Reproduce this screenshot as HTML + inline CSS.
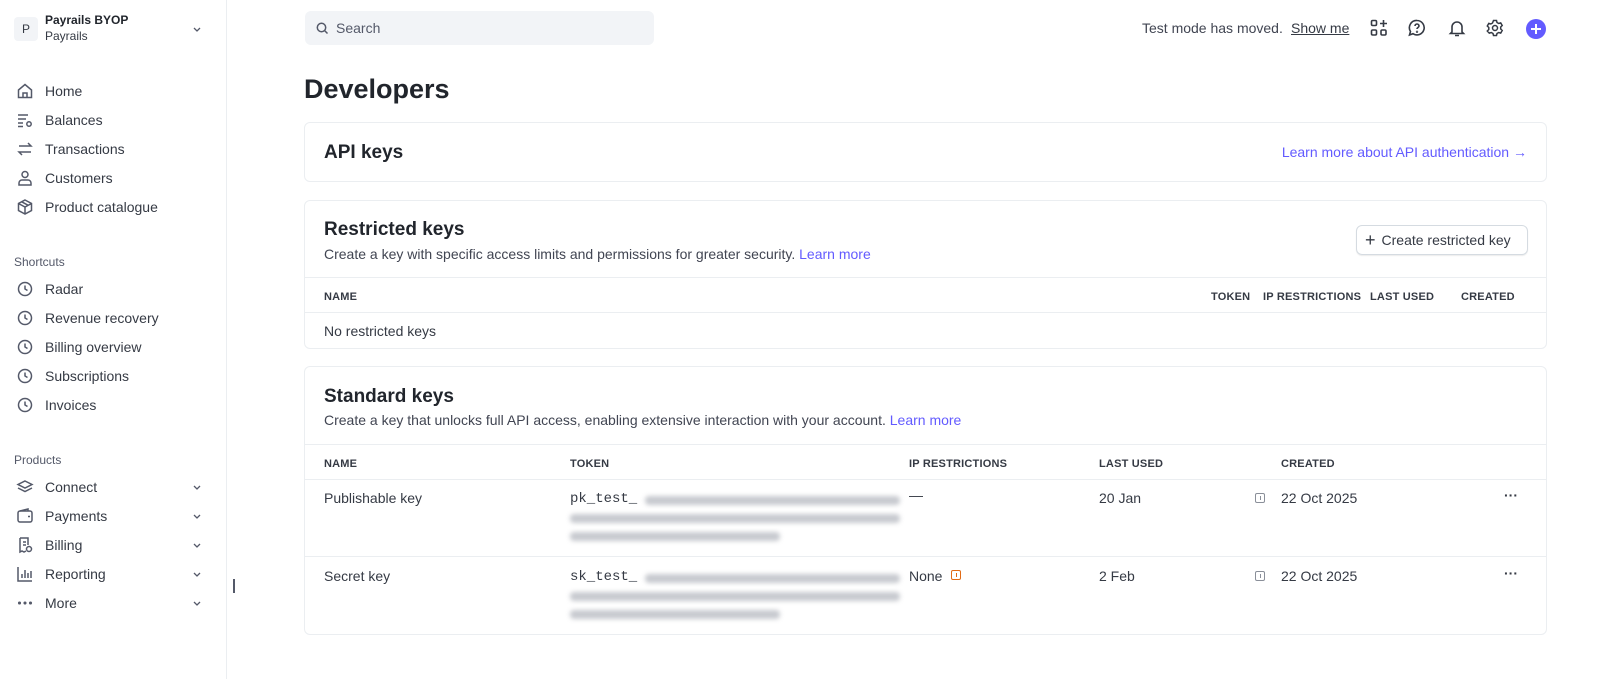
<!DOCTYPE html>
<html><head><meta charset="utf-8"><style>
*{box-sizing:border-box;margin:0;padding:0}
body{width:1617px;height:679px;overflow:hidden;background:#fff;font-family:"Liberation Sans",sans-serif;color:#353a44;font-size:14px;position:relative}
.side{position:absolute;left:0;top:0;width:227px;height:679px;border-right:1px solid #ebeef1}
.abs{position:absolute}
.nav{position:absolute;left:16px;display:flex;align-items:center;font-size:14px;color:#353a44}
.nav svg{width:18px;height:18px;margin-right:11px;fill:none;stroke:#545969;stroke-width:1.5}
.sec{position:absolute;left:14px;font-size:12px;color:#545969}
.chev{position:absolute;left:192px;width:10px;height:10px}
.card{position:absolute;left:304px;width:1243px;border:1px solid #ebeef1;border-radius:6px}
.hl{position:absolute;left:0;right:0;height:1px;background:#ebeef1}
.th{position:absolute;font-size:11px;font-weight:bold;color:#353a44;letter-spacing:.2px}
h2{position:absolute;font-size:19px;font-weight:bold;color:#21252c}
.sub{position:absolute;font-size:14px;color:#414552}
a{color:#635bff;text-decoration:none}
.mono{font-family:"Liberation Mono",monospace;font-size:14px;color:#353a44}
.blur{position:absolute;height:9px;background:#b9bcc3;filter:blur(2.5px);border-radius:4px;opacity:.8}
.info{position:absolute;width:10px;height:10px;border:1px solid #8a8f99;border-radius:2px}
.info:after{content:"";position:absolute;left:3.5px;top:2px;width:1px;height:4px;background:#8a8f99}
.dots{position:absolute;font-size:14px;font-weight:bold;color:#353a44;letter-spacing:0}
</style></head><body>
<div class="side">
  <div class="abs" style="left:14px;top:17px;width:24px;height:24px;background:#f2f4f7;border-radius:4px;font-size:12px;text-align:center;line-height:24px;color:#353a44">P</div>
  <div class="abs" style="left:45px;top:13px;font-size:12px;font-weight:bold;color:#21252c">Payrails BYOP</div>
  <div class="abs" style="left:45px;top:29px;font-size:12px;color:#353a44">Payrails</div>
  <svg class="chev" style="top:24px" viewBox="0 0 10 10"><path d="M2 4l3 3 3-3" stroke="#545969" stroke-width="1.3" fill="none"/></svg>

  <div class="nav" style="top:82px"><svg viewBox="0 0 18 18"><path d="M2.5 8L9 2.5 15.5 8V15.5H2.5Z M7 15.5V11h4v4.5"/></svg>Home</div>
  <div class="nav" style="top:111px"><svg viewBox="0 0 18 18"><path d="M2 4h10M2 8h8M2 12h5M2 15.5h5"/><circle cx="13" cy="13" r="2.2"/></svg>Balances</div>
  <div class="nav" style="top:140px"><svg viewBox="0 0 18 18"><path d="M3 6h12l-3-3M15 12H3l3 3"/></svg>Transactions</div>
  <div class="nav" style="top:169px"><svg viewBox="0 0 18 18"><circle cx="9" cy="5.5" r="3"/><path d="M3 16v-2a3 3 0 013-3h6a3 3 0 013 3v2z"/></svg>Customers</div>
  <div class="nav" style="top:198px"><svg viewBox="0 0 18 18"><path d="M9 2l6.5 3.5v7L9 16l-6.5-3.5v-7zM2.5 5.5L9 9l6.5-3.5M9 9v7M5.7 3.8l6.5 3.5"/></svg>Product catalogue</div>

  <div class="sec" style="top:255px">Shortcuts</div>
  <div class="nav" style="top:280px"><svg viewBox="0 0 18 18"><circle cx="9" cy="9" r="6.5"/><path d="M9 5.5V9l2.5 1.5"/></svg>Radar</div>
  <div class="nav" style="top:309px"><svg viewBox="0 0 18 18"><circle cx="9" cy="9" r="6.5"/><path d="M9 5.5V9l2.5 1.5"/></svg>Revenue recovery</div>
  <div class="nav" style="top:338px"><svg viewBox="0 0 18 18"><circle cx="9" cy="9" r="6.5"/><path d="M9 5.5V9l2.5 1.5"/></svg>Billing overview</div>
  <div class="nav" style="top:367px"><svg viewBox="0 0 18 18"><circle cx="9" cy="9" r="6.5"/><path d="M9 5.5V9l2.5 1.5"/></svg>Subscriptions</div>
  <div class="nav" style="top:396px"><svg viewBox="0 0 18 18"><circle cx="9" cy="9" r="6.5"/><path d="M9 5.5V9l2.5 1.5"/></svg>Invoices</div>

  <div class="sec" style="top:453px">Products</div>
  <div class="nav" style="top:478px"><svg viewBox="0 0 18 18"><path d="M9 3l7 3.5-7 3.5-7-3.5z M2 10l7 3.5 7-3.5"/></svg>Connect</div>
  <div class="nav" style="top:507px"><svg viewBox="0 0 18 18"><rect x="2" y="4" width="14" height="11" rx="2"/><path d="M12 9.5h2M4 4l8-2v2"/></svg>Payments</div>
  <div class="nav" style="top:536px"><svg viewBox="0 0 18 18"><path d="M4 2h8v7M4 2v14l2-1 2 1 2-1M7 6h3M7 9h3"/><circle cx="13" cy="13" r="2.5"/></svg>Billing</div>
  <div class="nav" style="top:565px"><svg viewBox="0 0 18 18"><path d="M2 2v14h14M6 13V9M9 13V5M12 13V8M15 13V6"/></svg>Reporting</div>
  <div class="nav" style="top:594px"><svg viewBox="0 0 18 18"><circle cx="3.5" cy="9" r=".8" fill="#545969"/><circle cx="9" cy="9" r=".8" fill="#545969"/><circle cx="14.5" cy="9" r=".8" fill="#545969"/></svg>More</div>
  <svg class="chev" style="top:482px" viewBox="0 0 10 10"><path d="M2 4l3 3 3-3" stroke="#545969" stroke-width="1.3" fill="none"/></svg>
  <svg class="chev" style="top:511px" viewBox="0 0 10 10"><path d="M2 4l3 3 3-3" stroke="#545969" stroke-width="1.3" fill="none"/></svg>
  <svg class="chev" style="top:540px" viewBox="0 0 10 10"><path d="M2 4l3 3 3-3" stroke="#545969" stroke-width="1.3" fill="none"/></svg>
  <svg class="chev" style="top:569px" viewBox="0 0 10 10"><path d="M2 4l3 3 3-3" stroke="#545969" stroke-width="1.3" fill="none"/></svg>
  <svg class="chev" style="top:598px" viewBox="0 0 10 10"><path d="M2 4l3 3 3-3" stroke="#545969" stroke-width="1.3" fill="none"/></svg>
</div>
<div class="abs" style="left:233px;top:579px;width:2px;height:14px;background:#545969"></div>

<div class="abs" style="left:305px;top:11px;width:349px;height:34px;background:#f2f4f7;border-radius:6px">
  <svg class="abs" style="left:11px;top:11px" width="13" height="13" viewBox="0 0 13 13"><circle cx="5.5" cy="5.5" r="4.2" stroke="#545969" stroke-width="1.5" fill="none"/><path d="M8.5 8.5l3 3" stroke="#545969" stroke-width="1.5"/></svg>
  <div class="abs" style="left:31px;top:9px;font-size:14px;color:#545969">Search</div>
</div>
<div class="abs" style="left:1142px;top:20px;font-size:14px;color:#414552">Test mode has moved.</div>
<div class="abs" style="left:1291px;top:20px;font-size:14px;color:#353a44;text-decoration:underline">Show me</div>
<svg class="abs" style="left:1370px;top:19px" width="18" height="18" viewBox="0 0 18 18" fill="none" stroke="#353a44" stroke-width="1.6"><rect x="1.5" y="1.5" width="5" height="5" rx="1.2"/><rect x="1.5" y="11" width="5" height="5" rx="1.2"/><rect x="11" y="11" width="5" height="5" rx="1.2"/><path d="M13.5 1v7M10 4.5h7"/></svg>
<svg class="abs" style="left:1408px;top:19px" width="18" height="18" viewBox="0 0 18 18" fill="none" stroke="#353a44" stroke-width="1.6"><path d="M9 1.5a7.2 7.2 0 11-4 13.2L1.5 16l1-3.5A7.2 7.2 0 019 1.5z"/><path d="M7 7a2 2 0 114 0c0 1.5-2 1.5-2 3"/><circle cx="9" cy="12.8" r=".4"/></svg>
<svg class="abs" style="left:1448px;top:19px" width="18" height="18" viewBox="0 0 18 18" fill="none" stroke="#353a44" stroke-width="1.6"><path d="M4 13V8a5 5 0 0110 0v5l1.5 1.5h-13z M7 16.5h4"/></svg>
<svg class="abs" style="left:1486px;top:19px" width="18" height="18" viewBox="0 0 18 18" fill="none" stroke="#353a44" stroke-width="1.5"><circle cx="9" cy="9" r="2.5"/><path d="M7.5 1.5h3l.5 2 1.7 1 2-.6 1.5 2.6-1.5 1.5v2l1.5 1.5-1.5 2.6-2-.6-1.7 1-.5 2h-3l-.5-2-1.7-1-2 .6L1.3 12l1.5-1.5v-2L1.3 7l1.5-2.6 2 .6 1.7-1z"/></svg>
<div class="abs" style="left:1526px;top:19px;width:20px;height:20px;border-radius:50%;background:#635bff"><svg width="20" height="20" viewBox="0 0 20 20"><path d="M10 5v10M5 10h10" stroke="#fff" stroke-width="2"/></svg></div>

<div class="abs" style="left:304px;top:74px;font-size:27px;font-weight:bold;color:#21252c">Developers</div>

<div class="card" style="top:122px;height:60px">
  <h2 style="left:19px;top:19px">API keys</h2>
  <div class="abs" style="right:19px;top:21px;font-size:14px;color:#635bff">Learn more about API authentication →</div>
</div>

<div class="card" style="top:200px;height:149px">
  <h2 style="left:19px;top:18px">Restricted keys</h2>
  <div class="sub" style="left:19px;top:45px">Create a key with specific access limits and permissions for greater security. <a>Learn more</a></div>
  <div class="abs" style="left:1051px;top:24px;width:172px;height:30px;border:1px solid #d5dbe1;border-radius:6px;box-shadow:0 1px 1px rgba(0,0,0,.08);font-size:14px;line-height:28px;color:#353a44;padding-left:8px"><span style="font-size:18px;vertical-align:-1px;margin-right:6px">+</span>Create restricted key</div>
  <div class="hl" style="top:76px"></div>
  <div class="th" style="left:19px;top:90px">NAME</div>
  <div class="th" style="left:906px;top:90px">TOKEN</div>
  <div class="th" style="left:958px;top:90px">IP RESTRICTIONS</div>
  <div class="th" style="left:1065px;top:90px">LAST USED</div>
  <div class="th" style="left:1156px;top:90px">CREATED</div>
  <div class="hl" style="top:111px"></div>
  <div class="abs" style="left:19px;top:122px;font-size:14px">No restricted keys</div>
</div>

<div class="card" style="top:366px;height:269px">
  <h2 style="left:19px;top:19px">Standard keys</h2>
  <div class="sub" style="left:19px;top:45px">Create a key that unlocks full API access, enabling extensive interaction with your account. <a>Learn more</a></div>
  <div class="hl" style="top:77px"></div>
  <div class="th" style="left:19px;top:91px">NAME</div>
  <div class="th" style="left:265px;top:91px">TOKEN</div>
  <div class="th" style="left:604px;top:91px">IP RESTRICTIONS</div>
  <div class="th" style="left:794px;top:91px">LAST USED</div>
  <div class="th" style="left:976px;top:91px">CREATED</div>
  <div class="hl" style="top:112px"></div>

  <div class="abs" style="left:19px;top:123px">Publishable key</div>
  <div class="abs mono" style="left:265px;top:124px">pk_test_</div>
  <div class="blur" style="left:340px;top:129px;width:255px"></div>
  <div class="blur" style="left:265px;top:147px;width:330px"></div>
  <div class="blur" style="left:265px;top:165px;width:210px"></div>
  <div class="abs" style="left:604px;top:120px">—</div>
  <div class="abs" style="left:794px;top:123px">20 Jan</div>
  <div class="info" style="left:950px;top:126px"></div>
  <div class="abs" style="left:976px;top:123px">22 Oct 2025</div>
  <div class="dots" style="left:1199px;top:120px">···</div>
  <div class="hl" style="top:189px"></div>

  <div class="abs" style="left:19px;top:201px">Secret key</div>
  <div class="abs mono" style="left:265px;top:202px">sk_test_</div>
  <div class="blur" style="left:340px;top:207px;width:255px"></div>
  <div class="blur" style="left:265px;top:225px;width:330px"></div>
  <div class="blur" style="left:265px;top:243px;width:210px"></div>
  <div class="abs" style="left:604px;top:201px">None</div>
  <div class="info" style="left:646px;top:203px;border-color:#e16b16"></div>
  <div class="abs" style="left:794px;top:201px">2 Feb</div>
  <div class="info" style="left:950px;top:204px"></div>
  <div class="abs" style="left:976px;top:201px">22 Oct 2025</div>
  <div class="dots" style="left:1199px;top:198px">···</div>
</div>
<style>.info[style*="e16b16"]:after{background:#e16b16}</style>
</body></html>
